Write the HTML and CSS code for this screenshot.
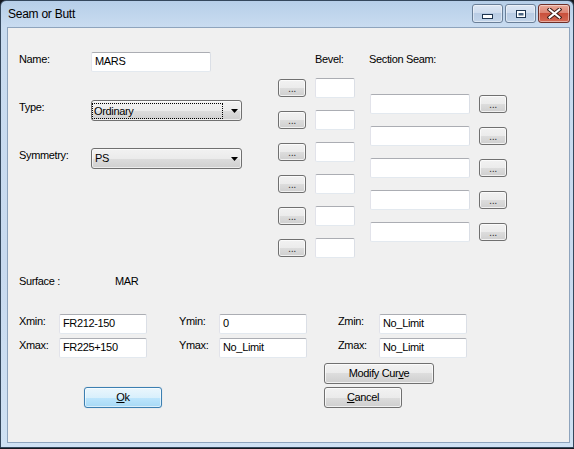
FILE: index.html
```html
<!DOCTYPE html>
<html>
<head>
<meta charset="utf-8">
<title>Seam or Butt</title>
<link rel="stylesheet" href="styles.css">
</head>
<body>
<div class="window">
  <div class="titlebar">
    <span class="title">Seam or Butt</span>
    <div class="caps">
      <div class="cap cap-min">
        <svg width="11" height="5" viewBox="0 0 11 5"><rect x="0.5" y="0.5" width="10" height="4" fill="#fff" stroke="#1f3550"/></svg>
      </div>
      <div class="cap cap-max">
        <svg width="10" height="8" viewBox="0 0 10 8"><rect x="0.5" y="0.5" width="9" height="7" fill="#fff" stroke="#1f3550"/><rect x="2.5" y="3" width="5" height="2.5" fill="#4a6482"/></svg>
      </div>
      <div class="cap cap-close">
        <svg width="15" height="11" viewBox="0 0 15 11"><path d="M2.5 1.5 L12.5 9.5 M12.5 1.5 L2.5 9.5" stroke="#3a1a14" stroke-width="4" stroke-linecap="square"/><path d="M2.5 1.5 L12.5 9.5 M12.5 1.5 L2.5 9.5" stroke="#fff" stroke-width="2" stroke-linecap="square"/></svg>
      </div>
    </div>
  </div>

  <div class="client">
    <div class="top">
      <div class="fields">
        <div class="lbl">Name:</div>
        <div class="tb tb-name">MARS</div>
        <div class="lbl">Type:</div>
        <div class="combo"><span class="focus">Ordinary</span><svg class="arrow" width="7" height="4" viewBox="0 0 7 4"><polygon points="0,0 7,0 3.5,4" fill="#000"/></svg></div>
        <div class="lbl">Symmetry:</div>
        <div class="combo"><span class="val">PS</span><svg class="arrow" width="7" height="4" viewBox="0 0 7 4"><polygon points="0,0 7,0 3.5,4" fill="#000"/></svg></div>
      </div>

      <div class="bevel">
        <div></div><div class="hdr">Bevel:</div>
        <div class="btn dots">...</div><div class="tb"></div>
        <div class="btn dots">...</div><div class="tb"></div>
        <div class="btn dots">...</div><div class="tb"></div>
        <div class="btn dots">...</div><div class="tb"></div>
        <div class="btn dots">...</div><div class="tb"></div>
        <div class="btn dots">...</div><div class="tb"></div>
      </div>

      <div class="seam">
        <div class="hdr hdr-seam">Section Seam:</div><div></div>
        <div class="tb"></div><div class="btn dots">...</div>
        <div class="tb"></div><div class="btn dots">...</div>
        <div class="tb"></div><div class="btn dots">...</div>
        <div class="tb"></div><div class="btn dots">...</div>
        <div class="tb"></div><div class="btn dots">...</div>
      </div>
    </div>

    <div class="surface">
      <span class="surface-lbl">Surface :</span>
      <span>MAR</span>
    </div>

    <div class="limits">
      <div class="lbl">Xmin:</div><div class="tb tb-lim">FR212-150</div>
      <div class="lbl">Ymin:</div><div class="tb tb-lim">0</div>
      <div class="lbl">Zmin:</div><div class="tb tb-lim">No_Limit</div>
      <div class="lbl">Xmax:</div><div class="tb tb-lim">FR225+150</div>
      <div class="lbl">Ymax:</div><div class="tb tb-lim">No_Limit</div>
      <div class="lbl">Zmax:</div><div class="tb tb-lim">No_Limit</div>
    </div>

    <div class="actions">
      <div class="act-row act-row-1">
        <div class="btn btn-modify">Modify Cur<u>v</u>e</div>
      </div>
      <div class="act-row act-row-2">
        <div class="btn btn-default btn-ok"><u>O</u>k</div>
        <div class="btn btn-cancel"><u>C</u>ancel</div>
      </div>
    </div>
  </div>
</div>
</body>
</html>
```

FILE: styles.css
```css
* { box-sizing: border-box; }

html, body {
  margin: 0;
  padding: 0;
}

body {
  width: 574px;
  height: 449px;
  overflow: hidden;
  background: #15181f;
  font-family: "Liberation Sans", Arial, sans-serif;
  font-size: 11px;
  letter-spacing: -0.35px;
  color: #000;
}

u { text-decoration: underline; text-underline-offset: 1px; }

.window {
  width: 574px;
  height: 448px;
  border: 1px solid #34475c;
  border-radius: 6px 6px 0 0;
  background: linear-gradient(180deg, #b6cee8 0px, #bfd5ec 12px, #c9dcf0 26px, #c8daef 60%, #cfe1f3 100%);
  padding: 0 3px 4px 6px;
  display: flex;
  flex-direction: column;
}

/* ---------- title bar ---------- */
.titlebar {
  height: 26px;
  display: flex;
  justify-content: space-between;
  align-items: flex-start;
}

.title {
  font-size: 12px;
  letter-spacing: -0.25px;
  line-height: 15px;
  margin: 6px 0 0 1px;
  color: #000;
}

.caps {
  display: flex;
  gap: 2px;
  margin-top: 3px;
}

.cap {
  height: 19px;
  width: 31px;
  border: 1px solid #6a7f98;
  border-radius: 3px;
  display: flex;
  align-items: center;
  justify-content: center;
  box-shadow: inset 0 0 0 1px rgba(255,255,255,0.45);
  background: linear-gradient(180deg, #dde7f4 0%, #cfdcee 45%, #b9cce4 50%, #c3d5ea 100%);
}

.cap-min { align-items: flex-end; padding-bottom: 3px; }

.cap-close {
  width: 32px;
  border-color: #6e2f28;
  background: linear-gradient(180deg, #e9a898 0%, #dc8574 45%, #c9503c 50%, #d46a55 100%);
}

/* ---------- client area ---------- */
.client {
  flex: 1;
  border: 1px solid #8ea4bd;
  background: #f0f0f0;
  padding: 24px 0 0 11px;
}

.lbl {
  line-height: 13px;
  margin-top: 1px;
  white-space: nowrap;
}

.tb {
  height: 20px;
  background: #fff;
  border: 1px solid;
  border-color: #abadb3 #dbdfe6 #e3e9ef #e2e3ea;
  border-radius: 2px;
  padding: 2px 3px 0;
  line-height: 13px;
  white-space: nowrap;
}

.btn {
  border: 1px solid #707070;
  border-radius: 3px;
  background: linear-gradient(180deg, #f2f2f2 0%, #ebebeb 50%, #dddddd 50%, #cfcfcf 100%);
  box-shadow: inset 0 0 0 1px rgba(255,255,255,0.7);
  display: flex;
  align-items: center;
  justify-content: center;
  line-height: 13px;
  white-space: nowrap;
}

.dots {
  width: 28px;
  height: 18px;
  color: #3a3a3a;
  padding-top: 1px;
}

/* ---------- top section ---------- */
.top {
  display: flex;
  align-items: flex-start;
}

.fields {
  width: 259px;
  display: grid;
  grid-template-columns: 72px auto;
  grid-auto-rows: 48px;
  align-items: start;
}

.tb-name { width: 120px; }

.combo {
  width: 151px;
  height: 21px;
  border: 1px solid #707070;
  border-radius: 3px;
  background: linear-gradient(180deg, #f2f2f2 0%, #ebebeb 50%, #dddddd 50%, #cfcfcf 100%);
  box-shadow: inset 0 0 0 1px rgba(255,255,255,0.6);
  display: flex;
  align-items: center;
  line-height: 13px;
}

.focus {
  width: 131px;
  height: 16px;
  border: 1px dotted #000;
  padding-left: 1px;
  line-height: 14px;
}

.val { padding-left: 3px; }

.arrow { margin-left: auto; margin-right: 3px; }

.bevel {
  margin-top: 1px;
  display: grid;
  grid-template-columns: 28px 40px;
  column-gap: 9px;
  row-gap: 12px;
  align-items: center;
}

.bevel .tb { height: 20px; }

.hdr { line-height: 13px; white-space: nowrap; }

.seam {
  margin-top: 1px;
  margin-left: 15px;
  display: grid;
  grid-template-columns: 100px 28px;
  column-gap: 9px;
  row-gap: 12px;
  align-items: center;
}

.hdr-seam { margin-left: -1px; margin-bottom: 16px; }

/* ---------- surface ---------- */
.surface {
  margin-top: 17px;
  display: flex;
  line-height: 13px;
}

.surface-lbl { width: 96px; }

/* ---------- limits ---------- */
.limits {
  margin-top: 26px;
  display: grid;
  grid-template-columns: 40px 120px 40px 119px 41px 88px;
  grid-auto-rows: 20px;
  row-gap: 4px;
  align-items: start;
}

.tb-lim { width: 88px; }

/* ---------- actions ---------- */
.act-row { display: flex; }

.act-row-1 { margin-top: 5px; padding-left: 305px; }
.act-row-2 { margin-top: 3px; }

.btn-modify { width: 110px; height: 21px; }

.btn-ok { width: 78px; height: 21px; margin-left: 65px; }
.btn-cancel { width: 78px; height: 21px; margin-left: 162px; }

.btn-default {
  border-color: #3c7fb1;
  background: linear-gradient(180deg, #eaf6fd 0%, #d9f0fc 50%, #bee6fd 50%, #a7d9f5 100%);
  box-shadow: inset 0 0 0 1px rgba(255,255,255,0.55), 0 0 1px 0 rgba(60,127,177,0.4);
}
```
